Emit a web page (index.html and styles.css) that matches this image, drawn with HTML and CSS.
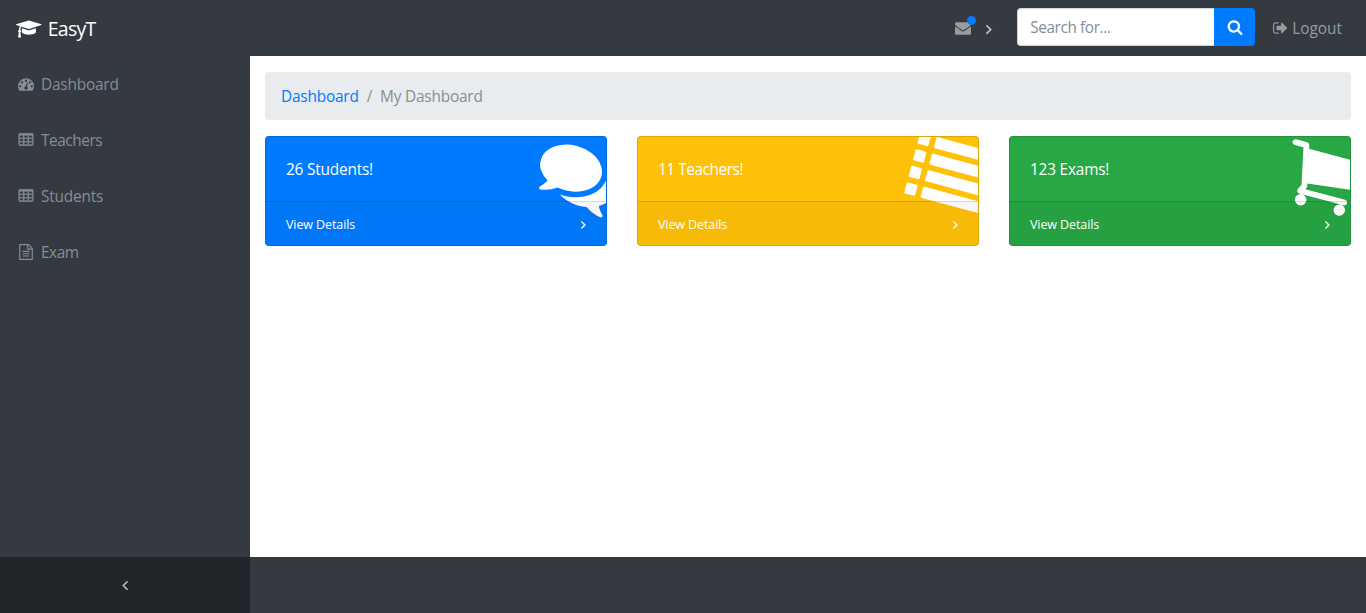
FILE: index.html
```html
<!DOCTYPE html>
<html lang="en">
<head>
<meta charset="utf-8">
<title>EasyT - My Dashboard</title>
<link rel="stylesheet" href="styles.css">
</head>
<body>
<svg class="sprite" aria-hidden="true">
  <symbol id="cap" viewBox="0 0 2304 1792"><path d="M1774 836l18 316q4 69-82 128t-235 93.500-323 34.500-323-34.500-235-93.500-82-128l18-316 574 181q22 7 48 7t48-7zm530-324q0 23-22 31l-1120 352q-4 1-10 1t-10-1l-652-206q-43 34-71 111.500t-34 178.500q63 36 63 109 0 69-58 107l58 433q2 14-8 25-9 11-24 11h-192q-15 0-24-11-10-11-8-25l58-433q-58-38-58-107 0-73 65-111 11-207 98-330l-333-104q-22-8-22-31t22-31l1120-352q4-1 10-1t10 1l1120 352q22 8 22 31z"/></symbol>
  <symbol id="gauge" viewBox="0 0 1792 1792"><path d="M384 1152q0-53-37.500-90.500t-90.500-37.500-90.500 37.500-37.500 90.500 37.500 90.500 90.500 37.500 90.500-37.500 37.500-90.500zm192-448q0-53-37.500-90.500t-90.500-37.500-90.500 37.500-37.500 90.500 37.500 90.500 90.500 37.500 90.500-37.500 37.500-90.500zm428 481l101-382q6-26-7.500-48.500t-38.500-29.500-48 6.500-30 39.500l-101 382q-60 5-107 43.500t-63 98.500q-20 77 20 146t117 89 146-20 89-117q16-60-6-117t-72-91zm660-33q0-53-37.500-90.500t-90.500-37.500-90.500 37.500-37.500 90.500 37.500 90.500 90.500 37.500 90.500-37.500 37.500-90.500zm-640-640q0-53-37.500-90.500t-90.500-37.500-90.500 37.500-37.500 90.500 37.500 90.500 90.500 37.500 90.500-37.500 37.500-90.500zm448 192q0-53-37.500-90.500t-90.500-37.500-90.500 37.500-37.500 90.500 37.500 90.500 90.500 37.500 90.500-37.500 37.500-90.500zm320 448q0 261-141 483-19 29-54 29h-1402q-35 0-54-29-141-221-141-483 0-182 71-348t191-286 286-191 348-71 348 71 286 191 191 286 71 348z"/></symbol>
  <symbol id="table" viewBox="0 0 1792 1792"><path fill-rule="evenodd" d="M224 128H1568q66 0 113 47t47 113V1376q0 66-47 113t-113 47H224q-66 0-113-47t-47-113V288q0-66 47-113t113-47zM192 384v256h384v-256zM704 384v256h384v-256zM1216 384v256h384v-256zM192 768v256h384v-256zM704 768v256h384v-256zM1216 768v256h384v-256zM192 1152v256h384v-256zM704 1152v256h384v-256zM1216 1152v256h384v-256z"/></symbol>
  <symbol id="file" viewBox="0 0 1792 1792"><path d="M1596 380q28 28 48 76t20 88v1152q0 40-28 68t-68 28h-1344q-40 0-68-28t-28-68v-1600q0-40 28-68t68-28h896q40 0 88 20t76 48zm-444-244v376h376q-10-29-22-41l-313-313q-12-12-41-22zm384 1528v-1024h-416q-40 0-68-28t-28-68v-416h-768v1536h1280zm-1024-864q0-14 9-23t23-9h704q14 0 23 9t9 23v64q0 14-9 23t-23 9h-704q-14 0-23-9t-9-23v-64zm736 224q14 0 23 9t9 23v64q0 14-9 23t-23 9h-704q-14 0-23-9t-9-23v-64q0-14 9-23t23-9h704zm0 256q14 0 23 9t9 23v64q0 14-9 23t-23 9h-704q-14 0-23-9t-9-23v-64q0-14 9-23t23-9h704z"/></symbol>
  <symbol id="envelope" viewBox="0 0 1792 1792"><path d="M1792 710v794q0 66-47 113t-113 47h-1472q-66 0-113-47t-47-113v-794q44 49 101 87 362 246 497 345 57 42 92.500 65.500t94.500 48 110 24.500h2q51 0 110-24.500t94.500-48 92.500-65.500q170-123 498-345 57-39 100-87zm0-294q0 79-49 151t-122 123q-376 261-468 325-10 7-42.500 31t-54 38.500-52 32.500-57.500 27-50 9h-2q-23 0-50-9t-57.500-27-52-32.500-54-38.500-42.500-31q-91-64-262-182.500t-205-142.500q-62-42-117-115.500t-55-136.500q0-78 41.500-130t118.500-52h1472q65 0 112.500 47t47.500 113z"/></symbol>
  <symbol id="right" viewBox="0 0 1792 1792"><path d="M1171 960q0 13-10 23l-466 466q-10 10-23 10t-23-10l-50-50q-10-10-10-23t10-23l393-393-393-393q-10-10-10-23t10-23l50-50q10-10 23-10t23 10l466 466q10 10 10 23z"/></symbol>
  <symbol id="left" viewBox="0 0 1792 1792"><path d="M1203 544q0 13-10 23l-393 393 393 393q10 10 10 23t-10 23l-50 50q-10 10-23 10t-23-10l-466-466q-10-10-10-23t10-23l466-466q10-10 23-10t23 10l50 50q10 10 10 23z"/></symbol>
  <symbol id="search" viewBox="0 0 1792 1792"><path d="M1216 832q0-185-131.500-316.500t-316.500-131.500-316.500 131.500-131.500 316.500 131.500 316.500 316.500 131.500 316.500-131.500 131.500-316.500zm512 832q0 52-38 90t-90 38q-54 0-90-38l-343-342q-179 124-399 124-143 0-273.500-55.500t-225-150-150-225-55.500-273.500 55.500-273.500 150-225 225-150 273.500-55.500 273.500 55.500 225 150 150 225 55.500 273.500q0 220-124 399l343 343q37 37 37 90z"/></symbol>
  <symbol id="signout" viewBox="0 0 1664 1792"><path d="M640 1440q0 4 1 20t.5 26.500-3 23.500-10 19.500-20.500 6.500h-320q-119 0-203.500-84.500t-84.500-203.500v-704q0-119 84.500-203.500t203.500-84.500h320q13 0 22.500 9.500t9.500 22.500q0 4 1 20t.5 26.500-3 23.500-10 19.500-20.500 6.500h-320q-66 0-113 47t-47 113v704q0 66 47 113t113 47h312l11.500 1 11.500 3 8 5.500 7 9 2 13.500zm928-544q0 26-19 45l-544 544q-19 19-45 19t-45-19-19-45v-288h-448q-26 0-45-19t-19-45v-384q0-26 19-45t45-19h448v-288q0-26 19-45t45-19 45 19l544 544q19 19 19 45z"/></symbol>
  <symbol id="comments" viewBox="0 0 1792 1792"><path d="M1408 768q0 139-94 257t-256.500 186.500-353.500 68.500q-86 0-176-16-124 88-278 128-36 9-86 16h-3q-11 0-20.500-8t-11.500-21q-1-3-1-6.500t.5-6.500 2-6l2.500-5 3.500-5.500 4-5 4.500-5 4-4.500q5-6 23-25t26-29.500 22.500-29 25-38.500 20.500-44q-124-72-195-177t-71-224q0-139 94-257t256.500-186.500 353.500-68.500 353.500 68.500 256.500 186.500 94 257zm384 256q0 120-71 224.500t-195 176.500q10 24 20.500 44t25 38.500 22.500 29 26 29.500 23 25q1 1 4 4.500t4.500 5 4 5 3.500 5.500l2.500 5 2 6 .5 6.500-1 6.500q-3 14-13 22t-22 7q-50-7-86-16-154-40-278-128-90 16-176 16-271 0-472-132 58 4 88 4 161 0 309-45t264-129q125-92 192-212t67-254q0-77-23-152 129 71 204 178t75 230z"/></symbol>
  <symbol id="list" viewBox="0 0 1792 1792">
    <g id="list-row"><rect x="0" y="1280" width="256" height="256" rx="32"/><rect x="384" y="1280" width="1408" height="256" rx="32"/></g>
    <use href="#list-row" y="-384"/><use href="#list-row" y="-768"/><use href="#list-row" y="-1152"/>
  </symbol>
  <symbol id="cart" viewBox="0 0 1792 1792"><path d="M704 1536q0 52-38 90t-90 38-90-38-38-90 38-90 90-38 90 38 38 90zm896 0q0 52-38 90t-90 38-90-38-38-90 38-90 90-38 90 38 38 90zm128-1088v512q0 24-16.500 42.500t-40.500 21.500l-1044 122q13 60 13 70 0 16-24 64h920q26 0 45 19t19 45-19 45-45 19h-1024q-26 0-45-19t-19-45q0-11 8-31.500t16-36 21.500-40 15.500-29.500l-177-823h-204q-26 0-45-19t-19-45 19-45 45-19h256q16 0 28.500 6.500t19.500 15.500 13 24.500 8 26 5.500 29.500 4.500 26h1201q26 0 45 19t19 45z"/></symbol>
</svg>

<header class="navbar">
  <a class="brand"><svg class="brand-icon"><use href="#cap"/></svg><span class="brand-name">EasyT</span></a>
  <div class="nav-right">
    <a class="messages">
      <svg class="icon"><use href="#envelope"/></svg>
      <span class="dot"></span>
    </a>
    <svg class="icon chevron caret"><use href="#right"/></svg>
    <form class="search">
      <input class="search-input" type="text" placeholder="Search for...">
      <button class="search-button" type="button" aria-label="Search"><svg class="icon"><use href="#search"/></svg></button>
    </form>
    <a class="logout"><svg class="logout-icon"><use href="#signout"/></svg><span class="label">Logout</span></a>
  </div>
</header>

<div class="layout">
  <nav class="sidebar">
    <div class="menu">
      <a class="menu-item"><svg class="icon"><use href="#gauge"/></svg><span class="label">Dashboard</span></a>
      <a class="menu-item tight"><svg class="icon grid-icon"><use href="#table"/></svg><span class="label">Teachers</span></a>
      <a class="menu-item"><svg class="icon grid-icon"><use href="#table"/></svg><span class="label">Students</span></a>
      <a class="menu-item tight"><svg class="icon"><use href="#file"/></svg><span class="label">Exam</span></a>
    </div>
    <a class="toggler"><svg class="icon chevron"><use href="#left"/></svg></a>
  </nav>
  <div class="page">
    <main class="content">
      <div class="breadcrumb"><a class="crumb-link">Dashboard</a><span class="slash">/</span><span class="crumb-current">My Dashboard</span></div>
      <div class="cards">
        <section class="card blue">
          <div class="card-body"><svg class="card-icon"><use href="#comments"/></svg><span>26 Students!</span></div>
          <a class="card-footer"><span class="label">View Details</span><svg class="small-icon chevron"><use href="#right"/></svg></a>
        </section>
        <section class="card yellow">
          <div class="card-body tight"><svg class="card-icon"><use href="#list"/></svg><span>11 Teachers!</span></div>
          <a class="card-footer"><span class="label">View Details</span><svg class="small-icon chevron"><use href="#right"/></svg></a>
        </section>
        <section class="card green">
          <div class="card-body"><svg class="card-icon"><use href="#cart"/></svg><span>123 Exams!</span></div>
          <a class="card-footer"><span class="label">View Details</span><svg class="small-icon chevron"><use href="#right"/></svg></a>
        </section>
      </div>
    </main>
    <footer class="page-footer"></footer>
  </div>
</div>
</body>
</html>
```
FILE: styles.css
```css
* { box-sizing: border-box; }

body {
  margin: 0;
  height: 100vh;
  display: flex;
  flex-direction: column;
  overflow: hidden;
  background: #fff;
  font: 15.4px/24px "Segoe UI", "Open Sans", "Noto Sans", sans-serif;
  letter-spacing: -0.2px;
  color: #212529;
}

svg { fill: currentColor; flex: none; display: block; }
.sprite { position: absolute; width: 0; height: 0; }
.icon { width: 16px; height: 16px; }
.chevron { stroke: currentColor; stroke-width: 70px; }
.grid-icon { stroke: currentColor; stroke-width: 24px; }
.label { padding-top: 2px; }
.tight { letter-spacing: -0.45px; }

.navbar {
  height: 56px;
  flex: none;
  display: flex;
  align-items: center;
  justify-content: space-between;
  padding: 0 24px 0 16px;
  background: #343a40;
}
.brand { display: flex; align-items: center; gap: 6px; color: #fff; }
.brand-icon { width: 25.700px; height: 20px; margin-top: 1px; }
.brand-name { padding-top: 2px; font-size: 19.500px; line-height: 30px; letter-spacing: -0.7px; }

.nav-right { display: flex; align-items: center; color: #999c9f; }
.messages { position: relative; }
.dot {
  position: absolute;
  top: -4px;
  right: -5px;
  width: 9px;
  height: 9px;
  border-radius: 50%;
  background: #007bff;
}
.caret { margin: 1px 20px 0 10px; color: #c0c2c4; }
.search { display: flex; width: 238px; height: 38px; margin: 0 18px 2px 0; }
.search-input {
  width: 197px;
  padding: 2px 12px 0;
  border: 1px solid #ced4da;
  border-right: 0;
  border-radius: 4px 0 0 4px;
  font: inherit;
  letter-spacing: -0.4px;
  outline: 0;
}
.search-input::placeholder { color: #868e96; opacity: 1; }
.search-button {
  width: 41px;
  padding: 0;
  display: flex;
  align-items: center;
  justify-content: center;
  border: 0;
  border-radius: 0 4px 4px 0;
  background: #007bff;
  color: #fff;
}
.logout { display: flex; align-items: center; gap: 4px; letter-spacing: 0; }
.logout-icon { width: 15px; height: 16px; }

.layout { flex: 1; display: flex; min-height: 0; }
.sidebar { width: 250px; flex: none; display: flex; flex-direction: column; background: #343a40; }
.menu { flex: 1; }
.menu-item {
  height: 56px;
  display: flex;
  align-items: center;
  gap: 7px;
  padding-left: 18px;
  color: #868e96;
}
.toggler {
  height: 56px;
  display: flex;
  align-items: center;
  justify-content: center;
  background: #212529;
  color: #adb5bd;
}

.page { flex: 1; display: flex; flex-direction: column; min-width: 0; }
.content { flex: 1; padding: 16px 15px 0; }
.page-footer { height: 56px; background: #343a40; }
.breadcrumb {
  display: flex;
  height: 48px;
  padding: 13px 16px 11px;
  margin-bottom: 16px;
  border-radius: 4px;
  background: #e9ecef;
  color: #868e96;
}
.crumb-link { color: #007bff; }
.slash { padding: 0 8px; }

.cards { display: grid; grid-template-columns: repeat(3, 1fr); gap: 30px; }
.card {
  position: relative;
  height: 110px;
  display: flex;
  flex-direction: column;
  overflow: hidden;
  border: 1px solid rgba(0, 0, 0, .125);
  border-radius: 4px;
  color: #fff;
}
.blue { background-color: #007bff; }
.yellow { background-color: #ffc107; }
.green { background-color: #28a745; }
.card-body { flex: 1; padding: 21px 20px 19px; }
/* Oversized decoration tilted into the card's top right corner */
.card-icon {
  position: absolute;
  top: -1px;
  right: -12.600px;
  width: 80px;
  height: 80px;
  transform: rotate(15deg);
  transform-origin: 40px 35.500px;
}
.card-footer {
  position: relative;
  height: 44px;
  display: flex;
  align-items: center;
  justify-content: space-between;
  padding: 0 16px 0 20px;
  border-top: 1px solid rgba(0, 0, 0, .125);
  background: rgba(0, 0, 0, .03);
  font-size: 12.500px;
  letter-spacing: -0.1px;
}
.small-icon { width: 13px; height: 13px; margin-top: 1px; }
```
